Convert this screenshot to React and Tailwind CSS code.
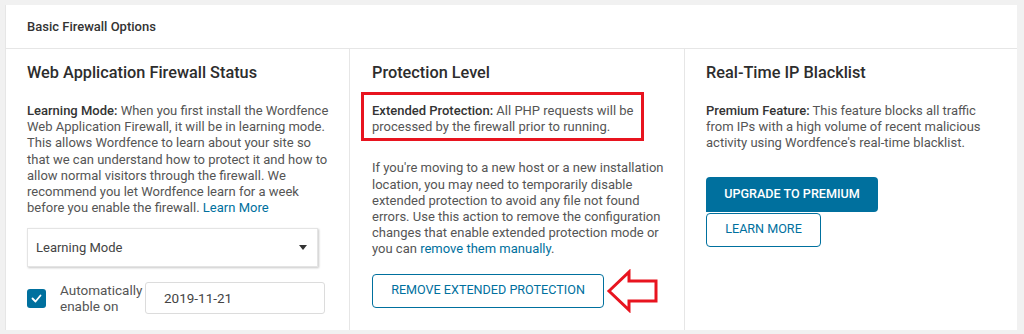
import React from "react";

const font = { fontFamily: "Roboto, 'Liberation Sans', sans-serif" };

const CheckIcon = () => (
  <svg width="11" height="9" viewBox="0 0 11 9" fill="none">
    <path d="M1.5 4.5l3 3 5-6" stroke="white" strokeWidth="1.8" strokeLinecap="round" strokeLinejoin="round" />
  </svg>
);

const RedArrow = () => (
  <svg width="54" height="44" viewBox="0 0 54 44" className="ml-[2px]">
    <polygon
      points="3,22 23,3 23,12 50,12 50,32 23,32 23,41"
      fill="none"
      stroke="#e8141f"
      strokeWidth="3"
      strokeLinejoin="miter"
    />
  </svg>
);

export default function App() {
  return (
    <div className="bg-[#f1f1f1] w-[1024px] h-[334px] pt-[5px] pl-[5px] overflow-hidden" style={font}>
      <div className="w-[1012px] bg-white border-l border-[#e6e6e6]">
        {/* Header */}
        <div className="h-[44px] flex items-center pl-[21px] border-b border-[#e6e6e6]">
          <span className="text-[13px] font-medium text-[#333]">Basic Firewall Options</span>
        </div>

        {/* Columns */}
        <div className="flex h-[281px]">
          {/* Firewall status */}
          <div className="w-[343px] pl-[21px] pr-[18px] pt-[13px]">
            <h3 className="text-[16.3px] leading-[22px] font-medium text-[#2d2d2d]">
              Web Application Firewall Status
            </h3>
            <p className="mt-[19px] text-[13px] leading-[16.2px] text-[#555]">
              <span className="font-medium text-[#333]">Learning Mode:</span> When you first install the Wordfence
              Web Application Firewall, it will be in learning mode. This allows Wordfence to learn about your site
              so that we can understand how to protect it and how to allow normal visitors through the firewall. We
              recommend you let Wordfence learn for a week before you enable the firewall.{" "}
              <span className="text-[#00709e]">Learn More</span>
            </p>
            <div className="mt-[12px] w-[291px] h-[39px] flex items-center justify-between pl-[8px] pr-[10px] bg-white border border-[#e4e4e4] shadow-[1px_1px_2px_rgba(0,0,0,0.22)]">
              <span className="text-[13px] text-[#444]">Learning Mode</span>
              <span className="w-0 h-0 border-l-[4px] border-r-[4px] border-t-[5px] border-l-transparent border-r-transparent border-t-[#333]"></span>
            </div>
            <div className="mt-[15px] flex items-center">
              <div className="w-[19px] h-[19px] rounded-[3px] bg-[#00709e] flex items-center justify-center">
                <CheckIcon />
              </div>
              <div className="ml-[14px] text-[13.5px] leading-[16px] text-[#555] w-[80px]">
                Automatically enable on
              </div>
              <div className="ml-[5px] w-[180px] h-[32px] border border-[#dcdcdc] rounded-[3px] flex items-center pl-[18px] text-[13.5px] text-[#444]">
                2019-11-21
              </div>
            </div>
          </div>

          {/* Protection level */}
          <div className="w-[335px] border-l border-[#e6e6e6] pl-[22px] pr-[8px] pt-[13px]">
            <h3 className="text-[16.3px] leading-[22px] font-medium text-[#2d2d2d]">Protection Level</h3>
            <div className="mt-[8px] -ml-[11px] w-[283px] border-[3px] border-[#e8141f] pl-[8px] pt-[8px] pb-[3px]">
              <p className="text-[13px] leading-[16.2px] text-[#555]">
                <span className="font-medium text-[#333]">Extended Protection:</span> All PHP requests will be
                processed by the firewall prior to running.
              </p>
            </div>
            <p className="mt-[19px] text-[13px] leading-[16.2px] text-[#555]">
              If you're moving to a new host or a new installation location, you may need to temporarily disable
              extended protection to avoid any file not found errors. Use this action to remove the configuration
              changes that enable extended protection mode or you can{" "}
              <span className="text-[#00709e]">remove them manually</span>.
            </p>
            <div className="mt-[11px] flex items-center">
              <button className="h-[34px] w-[232px] border border-[#00709e] rounded-[4px] text-[12.6px] text-[#00709e] bg-white">
                REMOVE EXTENDED PROTECTION
              </button>
              <RedArrow />
            </div>
          </div>

          {/* IP blacklist */}
          <div className="flex-1 border-l border-[#e6e6e6] pl-[21px] pr-[16px] pt-[13px]">
            <h3 className="text-[16.3px] leading-[22px] font-medium text-[#2d2d2d]">Real-Time IP Blacklist</h3>
            <p className="mt-[19px] text-[13px] leading-[16.2px] text-[#555] w-[282px]">
              <span className="font-medium text-[#333]">Premium Feature:</span> This feature blocks all traffic from
              IPs with a high volume of recent malicious activity using Wordfence's real-time blacklist.
            </p>
            <div className="mt-[25px] flex flex-col items-start">
              <button className="h-[35px] w-[172px] bg-[#00709e] text-white text-[12.6px] font-medium rounded-t-[4px] rounded-br-[4px]">
                UPGRADE TO PREMIUM
              </button>
              <button className="mt-[1px] h-[34px] w-[115px] bg-white border border-[#00709e] text-[#00709e] text-[12.6px] rounded-[4px]">
                LEARN MORE
              </button>
            </div>
          </div>
        </div>
      </div>
    </div>
  );
}
